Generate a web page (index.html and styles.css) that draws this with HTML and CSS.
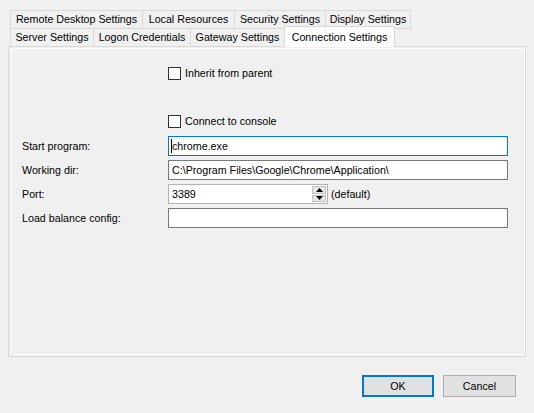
FILE: index.html
```html
<!DOCTYPE html>
<html>
<head>
<meta charset="utf-8">
<link rel="stylesheet" href="styles.css">
</head>
<body>
<div class="dialog">
  <div class="tabs">
    <div class="tabrow top">
      <div class="tab">Remote Desktop Settings</div>
      <div class="tab">Local Resources</div>
      <div class="tab">Security Settings</div>
      <div class="tab">Display Settings</div>
    </div>
    <div class="tabrow bottom">
      <div class="tab">Server Settings</div>
      <div class="tab">Logon Credentials</div>
      <div class="tab">Gateway Settings</div>
      <div class="tab selected">Connection Settings</div>
    </div>
  </div>
  <div class="panel">
    <div class="page">
      <div class="check first"><span class="box"></span><span>Inherit from parent</span></div>
      <div class="check second"><span class="box"></span><span>Connect to console</span></div>
      <div class="form">
        <div class="label">Start program:</div>
        <div class="field focused"><span class="caret"></span>chrome.exe</div>
        <div class="label">Working dir:</div>
        <div class="field">C:\Program Files\Google\Chrome\Application\</div>
        <div class="label">Port:</div>
        <div class="portrow">
          <div class="field port">3389
            <div class="spin">
              <div class="spinbtn"><svg width="7" height="4" viewBox="0 0 7 4"><path d="M3.5 0 L7 4 L0 4 Z" fill="#000"/></svg></div>
              <div class="spinbtn"><svg width="7" height="4" viewBox="0 0 7 4"><path d="M0 0 L7 0 L3.5 4 Z" fill="#000"/></svg></div>
            </div>
          </div>
          <span class="default">(default)</span>
        </div>
        <div class="label">Load balance config:</div>
        <div class="field"></div>
      </div>
    </div>
  </div>
  <div class="buttons">
    <div class="btn ok">OK</div>
    <div class="btn">Cancel</div>
  </div>
</div>
</body>
</html>
```
FILE: styles.css
```css
html, body {
  margin: 0;
  padding: 0;
  background: #f0f0f0;
}
body {
  font-family: "Liberation Sans", Arial, sans-serif;
  font-size: 10.7px;
  color: #000;
  width: 534px;
  height: 413px;
  overflow: hidden;
}
.dialog {
  padding-top: 10px;
}
.tabs {
  padding-left: 10px;
  position: relative;
  z-index: 2;
}
.tabrow {
  display: flex;
  height: 18px;
}
.tab {
  box-sizing: border-box;
  height: 19px;
  border: 1px solid #d9d9d9;
  background: #f0f0f0;
  padding: 0;
  text-align: center;
  line-height: 16px;
  margin-left: -1px;
  white-space: nowrap;
}
.tab:first-child {
  margin-left: 0;
}
.top .tab:nth-child(1) { width: 133px; }
.top .tab:nth-child(2) { width: 93px; }
.top .tab:nth-child(3) { width: 92px; }
.top .tab:nth-child(4) { width: 86px; }
.bottom .tab:nth-child(1) { width: 84px; }
.bottom .tab:nth-child(2) { width: 98px; }
.bottom .tab:nth-child(3) { width: 95px; }
.bottom .tab {
  height: 18px;
  border-bottom: none;
}
.tab.selected {
  width: 111px;
  background: #fff;
  height: 21px;
  margin-top: -2px;
  line-height: 20px;
  position: relative;
  z-index: 3;
}
.panel {
  margin-left: 8px;
  width: 518px;
  height: 311px;
  box-sizing: border-box;
  border: 1px solid #d9d9d9;
  padding: 1px 0 1px 2px;
  position: relative;
  z-index: 1;
}
.page {
  box-sizing: border-box;
  height: 100%;
  border: 1px solid #fff;
  padding: 18px 0 0 10px;
}
.check {
  display: flex;
  align-items: center;
  gap: 4px;
  margin-left: 146px;
  height: 13px;
  line-height: 13px;
}
.check.second {
  margin-top: 35px;
}
.box {
  width: 13px;
  height: 13px;
  box-sizing: border-box;
  border: 1px solid #333;
  background: #fff;
}
.form {
  margin-top: 8px;
  display: grid;
  grid-template-columns: 146px 340px;
  grid-auto-rows: 20px;
  row-gap: 4px;
  align-items: center;
}
.label {
  line-height: 13px;
}
.field {
  box-sizing: border-box;
  height: 20px;
  border: 1px solid #7a7a7a;
  background: #fff;
  padding: 0 0 0 3px;
  line-height: 18px;
  position: relative;
  white-space: nowrap;
}
.field.focused {
  border-color: #0078d7;
}
.caret {
  position: absolute;
  left: 2px;
  top: 2px;
  width: 1px;
  height: 14px;
  background: #000;
}
.portrow {
  display: flex;
  align-items: center;
  gap: 3px;
  height: 20px;
}
.field.port {
  width: 160px;
  border-color: #b4b4b4;
}
.spin {
  position: absolute;
  right: 0;
  top: 0;
  width: 15px;
  height: 18px;
  display: flex;
  flex-direction: column;
  gap: 1px;
  padding: 1px 1px 1px 0;
  box-sizing: border-box;
}
.spinbtn {
  flex: 1;
  background: #e6e6e6;
  border: 1px solid #c4c4c4;
  display: flex;
  align-items: center;
  justify-content: center;
}
.spinbtn svg {
  display: block;
}
.default {
  line-height: 13px;
}
.buttons {
  display: flex;
  justify-content: flex-end;
  gap: 9px;
  padding-right: 18px;
  margin-top: 18px;
}
.btn {
  box-sizing: border-box;
  width: 73px;
  height: 22px;
  border: 1px solid #adadad;
  background: #e1e1e1;
  text-align: center;
  line-height: 20px;
}
.btn.ok {
  width: 72px;
  border: 2px solid #0078d7;
  line-height: 18px;
}
```
